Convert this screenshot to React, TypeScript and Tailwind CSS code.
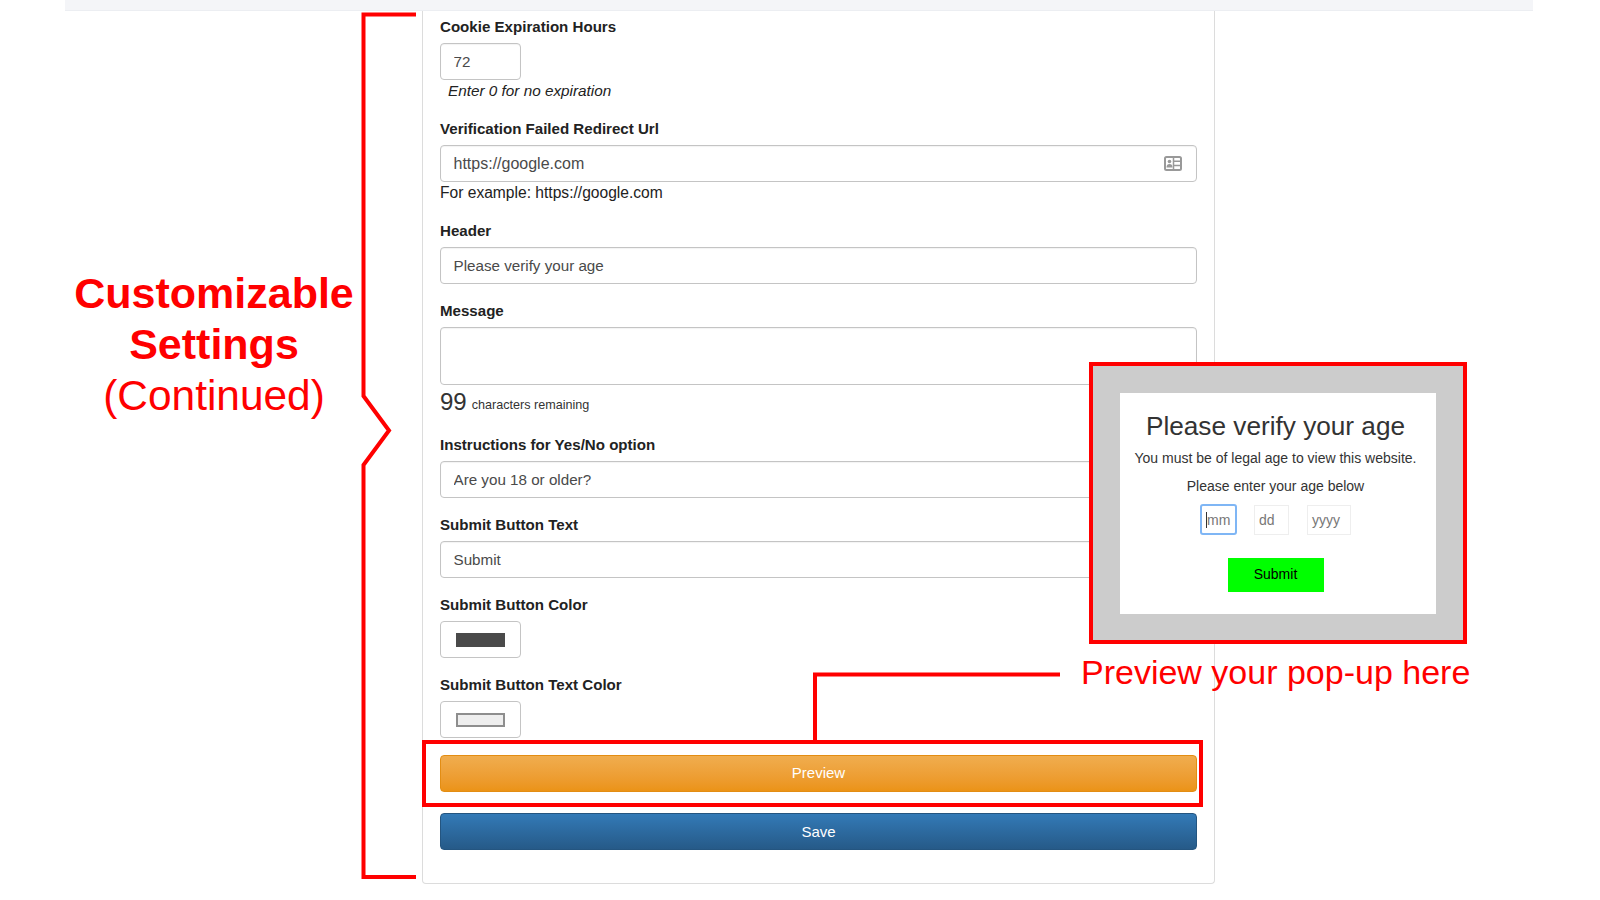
import React from "react";

const inputCls =
  "block h-[37px] w-full rounded-[4px] border border-[#c4c4c4] bg-white px-[12.5px] text-[15.2px] text-[#4a4a4a] outline-none shadow-[inset_0_1px_1px_rgba(0,0,0,0.05)]";

function Label({ children }: { children: React.ReactNode }) {
  return <div className="mb-[6px] h-[20px] text-[15.1px] leading-[20px] font-bold text-[#222]">{children}</div>;
}

function Field({ label, value, className = "mb-[18px]" }: { label: string; value: string; className?: string }) {
  return (
    <div className={className}>
      <Label>{label}</Label>
      <input readOnly value={value} className={inputCls} />
    </div>
  );
}

function Swatch({ label, className }: { label: string; className: string }) {
  return (
    <div className="mb-[17px]">
      <Label>{label}</Label>
      <div className="flex h-[37px] w-[81px] items-center justify-center rounded-[4px] border border-[#c4c4c4] bg-white">
        <div className={`h-[14px] w-[49px] ${className}`} />
      </div>
    </div>
  );
}

function CardIcon() {
  return (
    <svg width="18" height="15" viewBox="0 0 18 15" className="absolute right-[15px] top-[11px]">
      <rect x="1" y="1" width="16" height="13" rx="1.5" fill="#fff" stroke="#999" strokeWidth="2" />
      <circle cx="5.5" cy="5.5" r="1.8" fill="#999" />
      <path d="M2.5 11.5c0-2.5 1.2-3.5 3-3.5s3 1 3 3.5z" fill="#999" />
      <path d="M9.5 1v13M9.5 5.2h7M9.5 9.4h7" stroke="#999" strokeWidth="1.5" fill="none" />
    </svg>
  );
}

function Brace() {
  return (
    <svg width="1600" height="900" className="pointer-events-none absolute left-0 top-0" fill="none" stroke="#ff0000" strokeWidth="4">
      <path d="M416 14.5H363.5V396L389 430.5L363.5 465V877H416" />
      <path d="M815 740V674.5H1060" />
    </svg>
  );
}

function AgePopup() {
  return (
    <div className="absolute left-[1089px] top-[362px] flex h-[282px] w-[378px] items-center justify-center border-[4px] border-[#ff0000] bg-[#cccccc]">
      <div className="flex h-[221px] w-[316px] flex-col items-center bg-white pt-[17px] pr-[5px] text-[#333]">
        <div className="text-[26.2px] leading-[32px]">Please verify your age</div>
        <div className="mt-[7px] text-[14px] leading-[18px] whitespace-nowrap">You must be of legal age to view this website.</div>
        <div className="mt-[10px] text-[14px] leading-[18px]">Please enter your age below</div>
        <div className="mt-[9px] flex items-start text-[14px] leading-[28px] text-[#777]">
          <div className="h-[31px] w-[37px] rounded-[3px] border-2 border-[#7fb6f5] pl-[4px]">
            <span className="border-l border-[#333]">mm</span>
          </div>
          <div className="mt-[1px] ml-[17px] h-[30px] w-[35px] border border-[#eeeeee] pl-[4px]">dd</div>
          <div className="mt-[1px] ml-[18px] h-[30px] w-[44px] border border-[#eeeeee] pl-[4px]">yyyy</div>
        </div>
        <div className="mt-[23px] flex h-[34px] w-[96px] items-center justify-center bg-[#00ff00] text-[14px] text-black">Submit</div>
      </div>
    </div>
  );
}

export default function App() {
  return (
    <div className="relative h-[900px] w-[1600px] overflow-hidden bg-white font-['Liberation_Sans',Arial,sans-serif]">
      <div className="mr-[67px] ml-[65px] h-[11px] border-b border-[#eceef2] bg-[#f4f5f8]" />
      <div className="ml-[422px] h-[873px] w-[793px] rounded-b-[4px] border-x border-b border-[#dcdcdc] px-[17px] pt-[6px]">
        <div className="mb-[18px]">
          <Label>Cookie Expiration Hours</Label>
          <input readOnly value="72" className={`${inputCls} !w-[81px]`} />
          <div className="ml-[8px] h-[21px] text-[15.3px] leading-[21px] text-[#222] italic">Enter 0 for no expiration</div>
        </div>

        <div className="mb-[18px]">
          <Label>Verification Failed Redirect Url</Label>
          <div className="relative">
            <input readOnly value="https://google.com" className={`${inputCls} !text-[16px]`} />
            <CardIcon />
          </div>
          <div className="h-[21px] text-[15.6px] leading-[21px] text-[#222]">For example: https://google.com</div>
        </div>

        <Field label="Header" value="Please verify your age" className="mb-[17px]" />

        <div className="mb-[18px]">
          <Label>Message</Label>
          <textarea readOnly className={`${inputCls} !h-[58px] resize-none`} />
          <div className="mt-[1px] flex h-[31px] items-center text-[#333]">
            <span className="text-[24px] leading-[31px] font-light">99</span>
            <span className="mt-[8px] ml-[5px] text-[12.6px] text-[#333]">characters remaining</span>
          </div>
        </div>

        <Field label="Instructions for Yes/No option" value="Are you 18 or older?" className="mb-[17px]" />
        <Field label="Submit Button Text" value="Submit" className="mb-[17px]" />
        <Swatch label="Submit Button Color" className="bg-[#4a4a4a]" />
        <Swatch label="Submit Button Text Color" className="border-2 border-[#8e8e8e] bg-[#eeeeee]" />

        <div className="flex h-[37px] items-center justify-center rounded-[4px] border border-[#e38d13] bg-linear-to-b from-[#f0ad4e] to-[#eb9316] text-[15px] text-white">Preview</div>
        <div className="mt-[21px] flex h-[37px] items-center justify-center rounded-[4px] border border-[#245580] bg-linear-to-b from-[#337ab7] to-[#265a88] pt-[1px] text-[15px] text-white">Save</div>
      </div>

      <Brace />
      <div className="absolute left-[422px] top-[740px] h-[67px] w-[781px] border-[4px] border-[#ff0000]" />
      <AgePopup />

      <div className="absolute left-[60px] top-[268px] w-[308px] text-center text-[43px] leading-[51px] text-[#ff0000]">
        <div className="font-bold">Customizable</div>
        <div className="font-bold">Settings</div>
        <div className="text-[42.4px]">(Continued)</div>
      </div>
      <div className="absolute left-[1081px] top-[650px] text-[34px] leading-[44px] whitespace-nowrap text-[#ff0000]">Preview your pop-up here</div>
    </div>
  );
}
